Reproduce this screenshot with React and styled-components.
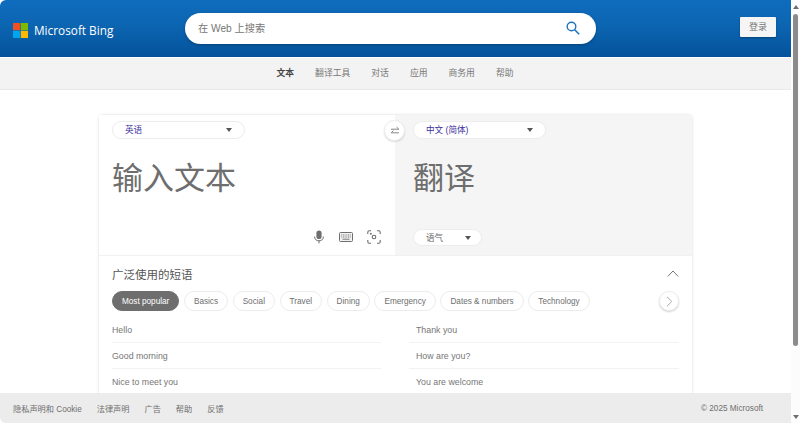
import React from 'react';
import styled, { createGlobalStyle } from 'styled-components';

const GlobalStyle = createGlobalStyle`
  html, body {
    margin: 0;
    padding: 0;
    height: 100%;
    overflow: hidden;
    background: #fff;
    font-family: "Liberation Sans", "Noto Sans CJK SC", sans-serif;
  }
  * { box-sizing: border-box; }
`;

const Window = styled.div`
  position: relative;
  display: flex;
  width: 800px;
  height: 423px;
  overflow: hidden;
`;

const Page = styled.div`
  width: 791px;
  height: 423px;
  overflow: hidden;
  display: flex;
  flex-direction: column;
`;

const Header = styled.header`
  flex: none;
  height: 57px;
  display: flex;
  align-items: flex-start;
  padding: 13px 15px 0 13px;
  background: linear-gradient(180deg, #0f6cbd 0%, #0c65b1 45%, #04529b 100%);
  border-top-left-radius: 6px;
`;

const Logo = styled.div`
  display: flex;
  align-items: center;
  gap: 6px;
  width: 172px;
  height: 34px;
  color: #fff;
  font-family: "Open Sans", sans-serif;
  font-size: 11.8px;
  font-weight: 500;
`;

const SearchBox = styled.div`
  width: 411px;
  height: 31px;
  display: flex;
  align-items: center;
  justify-content: space-between;
  padding: 0 16px 2px 13px;
  background: #fff;
  border-radius: 16px;
  box-shadow: 0 1px 3px rgba(0, 0, 0, 0.25);
  color: #767676;
  font-size: 10.2px;
`;

const LoginButton = styled.button`
  margin: 4px 0 0 auto;
  width: 36px;
  height: 20px;
  padding: 0 0 1px;
  border: 0;
  border-radius: 1px;
  background: #f5f5f5;
  color: #767676;
  font-family: inherit;
  font-size: 9px;
  box-shadow: 0 1px 2px rgba(0, 0, 0, 0.3);
`;

const SubNav = styled.nav`
  flex: none;
  height: 32px;
  margin-top: 1px;
  display: flex;
  align-items: center;
  justify-content: center;
  gap: 21px;
  padding: 0 1px 2px 0;
  background: #f3f3f3;
  border-bottom: 1px solid #e9e9e9;
`;

const NavLink = styled.a`
  color: ${p => (p.$active ? '#444' : '#767676')};
  font-size: 8.8px;
  font-weight: ${p => (p.$active ? 700 : 400)};
`;

const Card = styled.main`
  flex: none;
  width: 593px;
  margin: 25px 0 0 99px;
  background: #fff;
  border-radius: 4px 4px 0 0;
  box-shadow: 0 0 3px rgba(0, 0, 0, 0.16);
`;

const Panels = styled.section`
  position: relative;
  display: grid;
  grid-template-columns: 296px 297px;
  height: 141px;
  border-bottom: 1px solid #f1f1f1;
`;

const Panel = styled.div`
  display: flex;
  flex-direction: column;
  align-items: flex-start;
  padding: 6px 13px 0 ${p => (p.$muted ? 18 : 13)}px;
  background: ${p => (p.$muted ? '#f5f5f5' : '#fff')};
  border-top-right-radius: ${p => (p.$muted ? '4px' : 0)};
`;

const Select = styled.div`
  width: ${p => p.$width}px;
  height: ${p => (p.$small ? 17 : 18)}px;
  display: flex;
  align-items: center;
  justify-content: space-between;
  padding: 0 ${p => (p.$small ? 10 : 12)}px 2px 12px;
  background: #fff;
  border: 1px solid #ececec;
  border-radius: 10px;
  color: ${p => (p.$small ? '#666' : '#3b2f9e')};
  font-size: 8.6px;
`;

const Caret = styled.span`
  width: 0;
  height: 0;
  margin-top: 2px;
  border-left: 3.5px solid transparent;
  border-right: 3.5px solid transparent;
  border-top: 4px solid #555;
`;

const BigText = styled.div`
  margin: 18px 0 0 0;
  height: 48px;
  color: #6e6e6e;
  font-size: 31px;
  line-height: 44px;
`;

const ToolRow = styled.div`
  margin-top: auto;
  align-self: flex-end;
  display: flex;
  align-items: center;
  gap: 14px;
  height: 20px;
  margin-bottom: 8px;
  margin-right: 1px;
`;

const ToneSlot = styled.div`
  margin-top: auto;
  margin-bottom: 9px;
`;

const SwapButton = styled.button`
  position: absolute;
  top: 5px;
  left: 285px;
  width: 21px;
  height: 21px;
  padding: 0;
  display: flex;
  align-items: center;
  justify-content: center;
  background: #fff;
  border: 1px solid #eee;
  border-radius: 50%;
  box-shadow: 0 1px 2px rgba(0, 0, 0, 0.15);
`;

const Phrases = styled.section`
  padding: 0 13px;
`;

const PhraseHead = styled.div`
  display: flex;
  align-items: center;
  justify-content: space-between;
  height: 35px;
  color: #555;
  font-size: 11.5px;
`;

const Chips = styled.div`
  position: relative;
  display: flex;
  gap: 4.6px;
  height: 20px;
`;

const Chip = styled.span`
  height: 20px;
  display: flex;
  align-items: center;
  padding: 0 9px;
  border: 1px solid ${p => (p.$active ? '#6e6e6e' : '#ececec')};
  border-radius: 10px;
  background: ${p => (p.$active ? '#6e6e6e' : '#fff')};
  color: ${p => (p.$active ? '#fff' : '#6e6e6e')};
  font-size: 8.2px;
`;

const NextButton = styled.button`
  position: absolute;
  right: 0;
  top: 0;
  width: 20px;
  height: 20px;
  padding: 0;
  display: flex;
  align-items: center;
  justify-content: center;
  background: #fff;
  border: 1px solid #eee;
  border-radius: 50%;
  box-shadow: 0 1px 2px rgba(0, 0, 0, 0.2);
`;

const PhraseGrid = styled.div`
  display: grid;
  grid-template-columns: 269px 264px;
  column-gap: 34px;
  margin-top: 6px;
`;

const Phrase = styled.div`
  height: 26px;
  display: flex;
  align-items: center;
  padding-left: ${p => (p.$right ? 7 : 0)}px;
  margin-left: ${p => (p.$right ? -6 : 0)}px;
  border-bottom: 1px solid #f2f2f2;
  color: #767676;
  font-size: 8.8px;
`;

const Footer = styled.footer`
  position: absolute;
  left: 0;
  bottom: 0;
  width: 791px;
  height: 30px;
  display: flex;
  align-items: center;
  justify-content: space-between;
  padding: 0 28px 0 13px;
  background: #ececec;
  border-bottom-left-radius: 6px;
  color: #6e6e6e;
  font-size: 8.2px;
`;

const FooterLinks = styled.div`
  display: flex;
  gap: 15px;
`;

const Scrollbar = styled.div`
  flex: none;
  width: 9px;
  height: 423px;
  display: flex;
  flex-direction: column;
  align-items: center;
  justify-content: space-between;
  padding: 5px 0 4px;
  background: #fcfcfc;
`;

const Thumb = styled.div`
  width: 5px;
  height: 332px;
  margin: 5px 0 auto;
  background: #8b8b8b;
  border-radius: 3px;
`;

const ScrollArrow = styled.span`
  width: 0;
  height: 0;
  border-left: 3px solid transparent;
  border-right: 3px solid transparent;
  ${p => (p.$up ? 'border-bottom: 4px solid #6e6e6e;' : 'border-top: 4px solid #6e6e6e;')}
`;

const MsLogo = () => (
  <svg width="15" height="15" viewBox="0 0 15 15">
    <rect width="7.2" height="7.2" fill="#f25022" />
    <rect x="7.8" width="7.2" height="7.2" fill="#7fba00" />
    <rect y="7.8" width="7.2" height="7.2" fill="#00a4ef" />
    <rect x="7.8" y="7.8" width="7.2" height="7.2" fill="#ffb900" />
  </svg>
);

const SearchIcon = () => (
  <svg width="14" height="14" viewBox="0 0 14 14" fill="none" stroke="#1f74bd" strokeWidth="1.4">
    <circle cx="5.5" cy="5.5" r="4.3" />
    <path d="M8.7 8.7 L13.2 13.2" strokeWidth="1.6" />
  </svg>
);

const MicIcon = () => (
  <svg width="12" height="14" viewBox="0 0 12 14" fill="none">
    <rect x="3.4" y="0.5" width="5.2" height="8.6" rx="2.6" fill="#6e6e6e" />
    <path d="M1.6 6.6 C1.6 9.4 3.4 10.8 6 10.8 C8.6 10.8 10.4 9.4 10.4 6.6 M6 10.8 V13.4" stroke="#6e6e6e" strokeWidth="1" />
  </svg>
);

const KeyboardIcon = () => (
  <svg width="14" height="10" viewBox="0 0 14 10" fill="none">
    <rect x="0.5" y="0.5" width="13" height="9" rx="1" fill="#f2f2f2" stroke="#6e6e6e" />
    <path d="M2.2 3h9.6M2.2 5h9.6" stroke="#777" strokeDasharray="1 0.7" />
    <path d="M3.5 7.2h7" stroke="#777" />
  </svg>
);

const CameraIcon = () => (
  <svg width="14" height="14" viewBox="0 0 14 14" fill="none" stroke="#6e6e6e" strokeWidth="1.1">
    <path d="M0.8 4 V2.2 A1.4 1.4 0 0 1 2.2 0.8 H4 M10 0.8 H11.8 A1.4 1.4 0 0 1 13.2 2.2 V4 M13.2 10 V11.8 A1.4 1.4 0 0 1 11.8 13.2 H10 M4 13.2 H2.2 A1.4 1.4 0 0 1 0.8 11.8 V10" />
    <circle cx="7" cy="7" r="1.8" />
    <circle cx="3.9" cy="3.7" r="0.4" />
  </svg>
);

const SwapIcon = () => (
  <svg width="10" height="10" viewBox="0 0 10 10" fill="none" stroke="#7a7a7a" strokeWidth="0.9">
    <path d="M1 3.2 H8.8 M6.6 1 L8.8 3.2 M9 6.8 H1.2 M3.4 4.6 L1.2 6.8" />
  </svg>
);

const ChevronUp = () => (
  <svg width="12" height="7" viewBox="0 0 12 7" fill="none" stroke="#666" strokeWidth="0.9">
    <path d="M0.8 6.4 L6 1 L11.2 6.4" />
  </svg>
);

const ChevronRight = () => (
  <svg width="7" height="11" viewBox="0 0 7 11" fill="none" stroke="#aaa" strokeWidth="1">
    <path d="M1 0.8 L5.8 5.5 L1 10.2" />
  </svg>
);

const navItems = ['文本', '翻译工具', '对话', '应用', '商务用', '帮助'];
const chips = ['Most popular', 'Basics', 'Social', 'Travel', 'Dining', 'Emergency', 'Dates & numbers', 'Technology'];
const phrases = [
  ['Hello', 'Thank you'],
  ['Good morning', 'How are you?'],
  ['Nice to meet you', 'You are welcome'],
];
const footerLinks = ['隐私声明和 Cookie', '法律声明', '广告', '帮助', '反馈'];

export default function App() {
  return (
    <Window>
      <GlobalStyle />
      <Page>
        <Header>
          <Logo>
            <MsLogo />
            Microsoft Bing
          </Logo>
          <SearchBox>
            在 Web 上搜索
            <SearchIcon />
          </SearchBox>
          <LoginButton>登录</LoginButton>
        </Header>
        <SubNav>
          {navItems.map((item, i) => (
            <NavLink key={item} $active={i === 0}>{item}</NavLink>
          ))}
        </SubNav>
        <Card>
          <Panels>
            <Panel>
              <Select $width={133}>
                英语
                <Caret />
              </Select>
              <BigText>输入文本</BigText>
              <ToolRow>
                <MicIcon />
                <KeyboardIcon />
                <CameraIcon />
              </ToolRow>
            </Panel>
            <Panel $muted>
              <Select $width={133}>
                中文 (简体)
                <Caret />
              </Select>
              <BigText>翻译</BigText>
              <ToneSlot>
                <Select $width={69} $small>
                  语气
                  <Caret />
                </Select>
              </ToneSlot>
            </Panel>
            <SwapButton><SwapIcon /></SwapButton>
          </Panels>
          <Phrases>
            <PhraseHead>
              广泛使用的短语
              <ChevronUp />
            </PhraseHead>
            <Chips>
              {chips.map((chip, i) => (
                <Chip key={chip} $active={i === 0}>{chip}</Chip>
              ))}
              <NextButton><ChevronRight /></NextButton>
            </Chips>
            <PhraseGrid>
              {phrases.map(([left, right]) => (
                <React.Fragment key={left}>
                  <Phrase>{left}</Phrase>
                  <Phrase $right>{right}</Phrase>
                </React.Fragment>
              ))}
            </PhraseGrid>
          </Phrases>
        </Card>
      </Page>
      <Scrollbar>
        <ScrollArrow $up />
        <Thumb />
        <ScrollArrow />
      </Scrollbar>
      <Footer>
        <FooterLinks>
          {footerLinks.map(link => (
            <span key={link}>{link}</span>
          ))}
        </FooterLinks>
        <span>© 2025 Microsoft</span>
      </Footer>
    </Window>
  );
}
